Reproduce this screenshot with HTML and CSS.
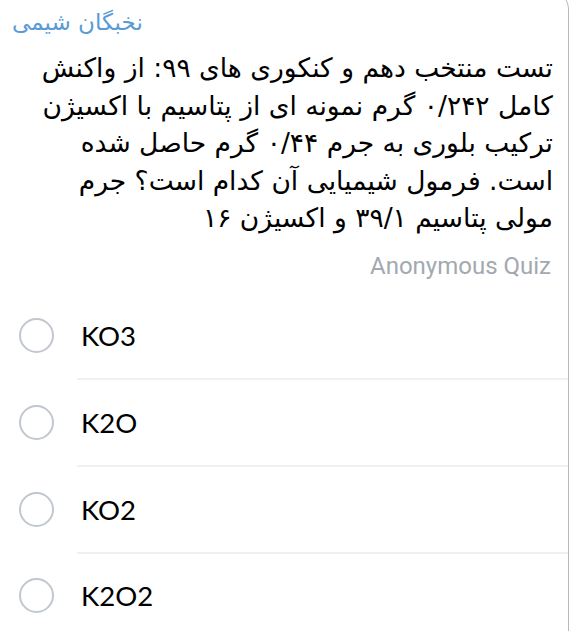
FILE: index.html
```html
<!DOCTYPE html>
<html lang="fa">
<head>
<meta charset="utf-8">
<link rel="stylesheet" href="styles.css">
</head>
<body>
<div class="bubble">
  <div class="sender" dir="rtl">نخبگان شیمی</div>
  <div class="question" dir="rtl">تست منتخب دهم و کنکوری های ۹۹: از واکنش<br>کامل ۰/۲۴۲ گرم نمونه ای از پتاسیم با اکسیژن<br>ترکیب بلوری به جرم ۰/۴۴ گرم حاصل شده<br>است. فرمول شیمیایی آن کدام است؟ جرم<br>مولی پتاسیم ۳۹/۱ و اکسیژن ۱۶</div>
  <div class="meta">Anonymous Quiz</div>
  <ul class="options">
    <li class="option"><span class="radio"></span><span class="label">KO3</span></li>
    <li class="option"><span class="radio"></span><span class="label">K2O</span></li>
    <li class="option"><span class="radio"></span><span class="label">KO2</span></li>
    <li class="option"><span class="radio"></span><span class="label">K2O2</span></li>
  </ul>
</div>
</body>
</html>
```
FILE: styles.css
```css
html, body {
  margin: 0;
  padding: 0;
  background: #ffffff;
}
body {
  width: 570px;
  height: 631px;
  overflow: hidden;
}
.bubble {
  width: 569px;
  margin-top: -12px;
  padding-top: 12px;
  border-right: 1.5px solid #b3b9c0;
  border-top-right-radius: 22px;
  box-sizing: border-box;
  height: 660px;
}
.sender {
  font-family: "DejaVu Sans", sans-serif;
  font-size: 23px;
  color: #5a9bd6;
  text-align: left;
  padding: 6px 0 0 12px;
  height: 34px;
  line-height: 32px;
}
.question {
  font-family: "DejaVu Sans", sans-serif;
  font-size: 26.5px;
  line-height: 37.5px;
  color: #000;
  text-align: right;
  padding: 0 15px 0 10px;
  margin-top: 9px;
}
.meta {
  font-family: Roboto, "Open Sans", sans-serif;
  font-size: 24px;
  color: #a2a9b1;
  text-align: right;
  padding-right: 17px;
  margin-top: 14px;
  height: 30px;
  line-height: 30px;
}
.options {
  list-style: none;
  margin: 12px 0 0 0;
  padding: 0;
}
.option {
  display: flex;
  align-items: center;
  height: 86.7px;
  position: relative;
}
.option + .option::before {
  content: "";
  position: absolute;
  top: -1px;
  left: 77px;
  right: 0;
  height: 2px;
  background: #eef1f4;
}
.radio {
  width: 31px;
  height: 31px;
  border: 2px solid #c1c7cf;
  border-radius: 50%;
  margin-left: 19px;
  flex-shrink: 0;
}
.label {
  font-family: Lato, "Open Sans", sans-serif;
  font-size: 27.5px;
  color: #000;
  margin-left: 27px;
}
```
